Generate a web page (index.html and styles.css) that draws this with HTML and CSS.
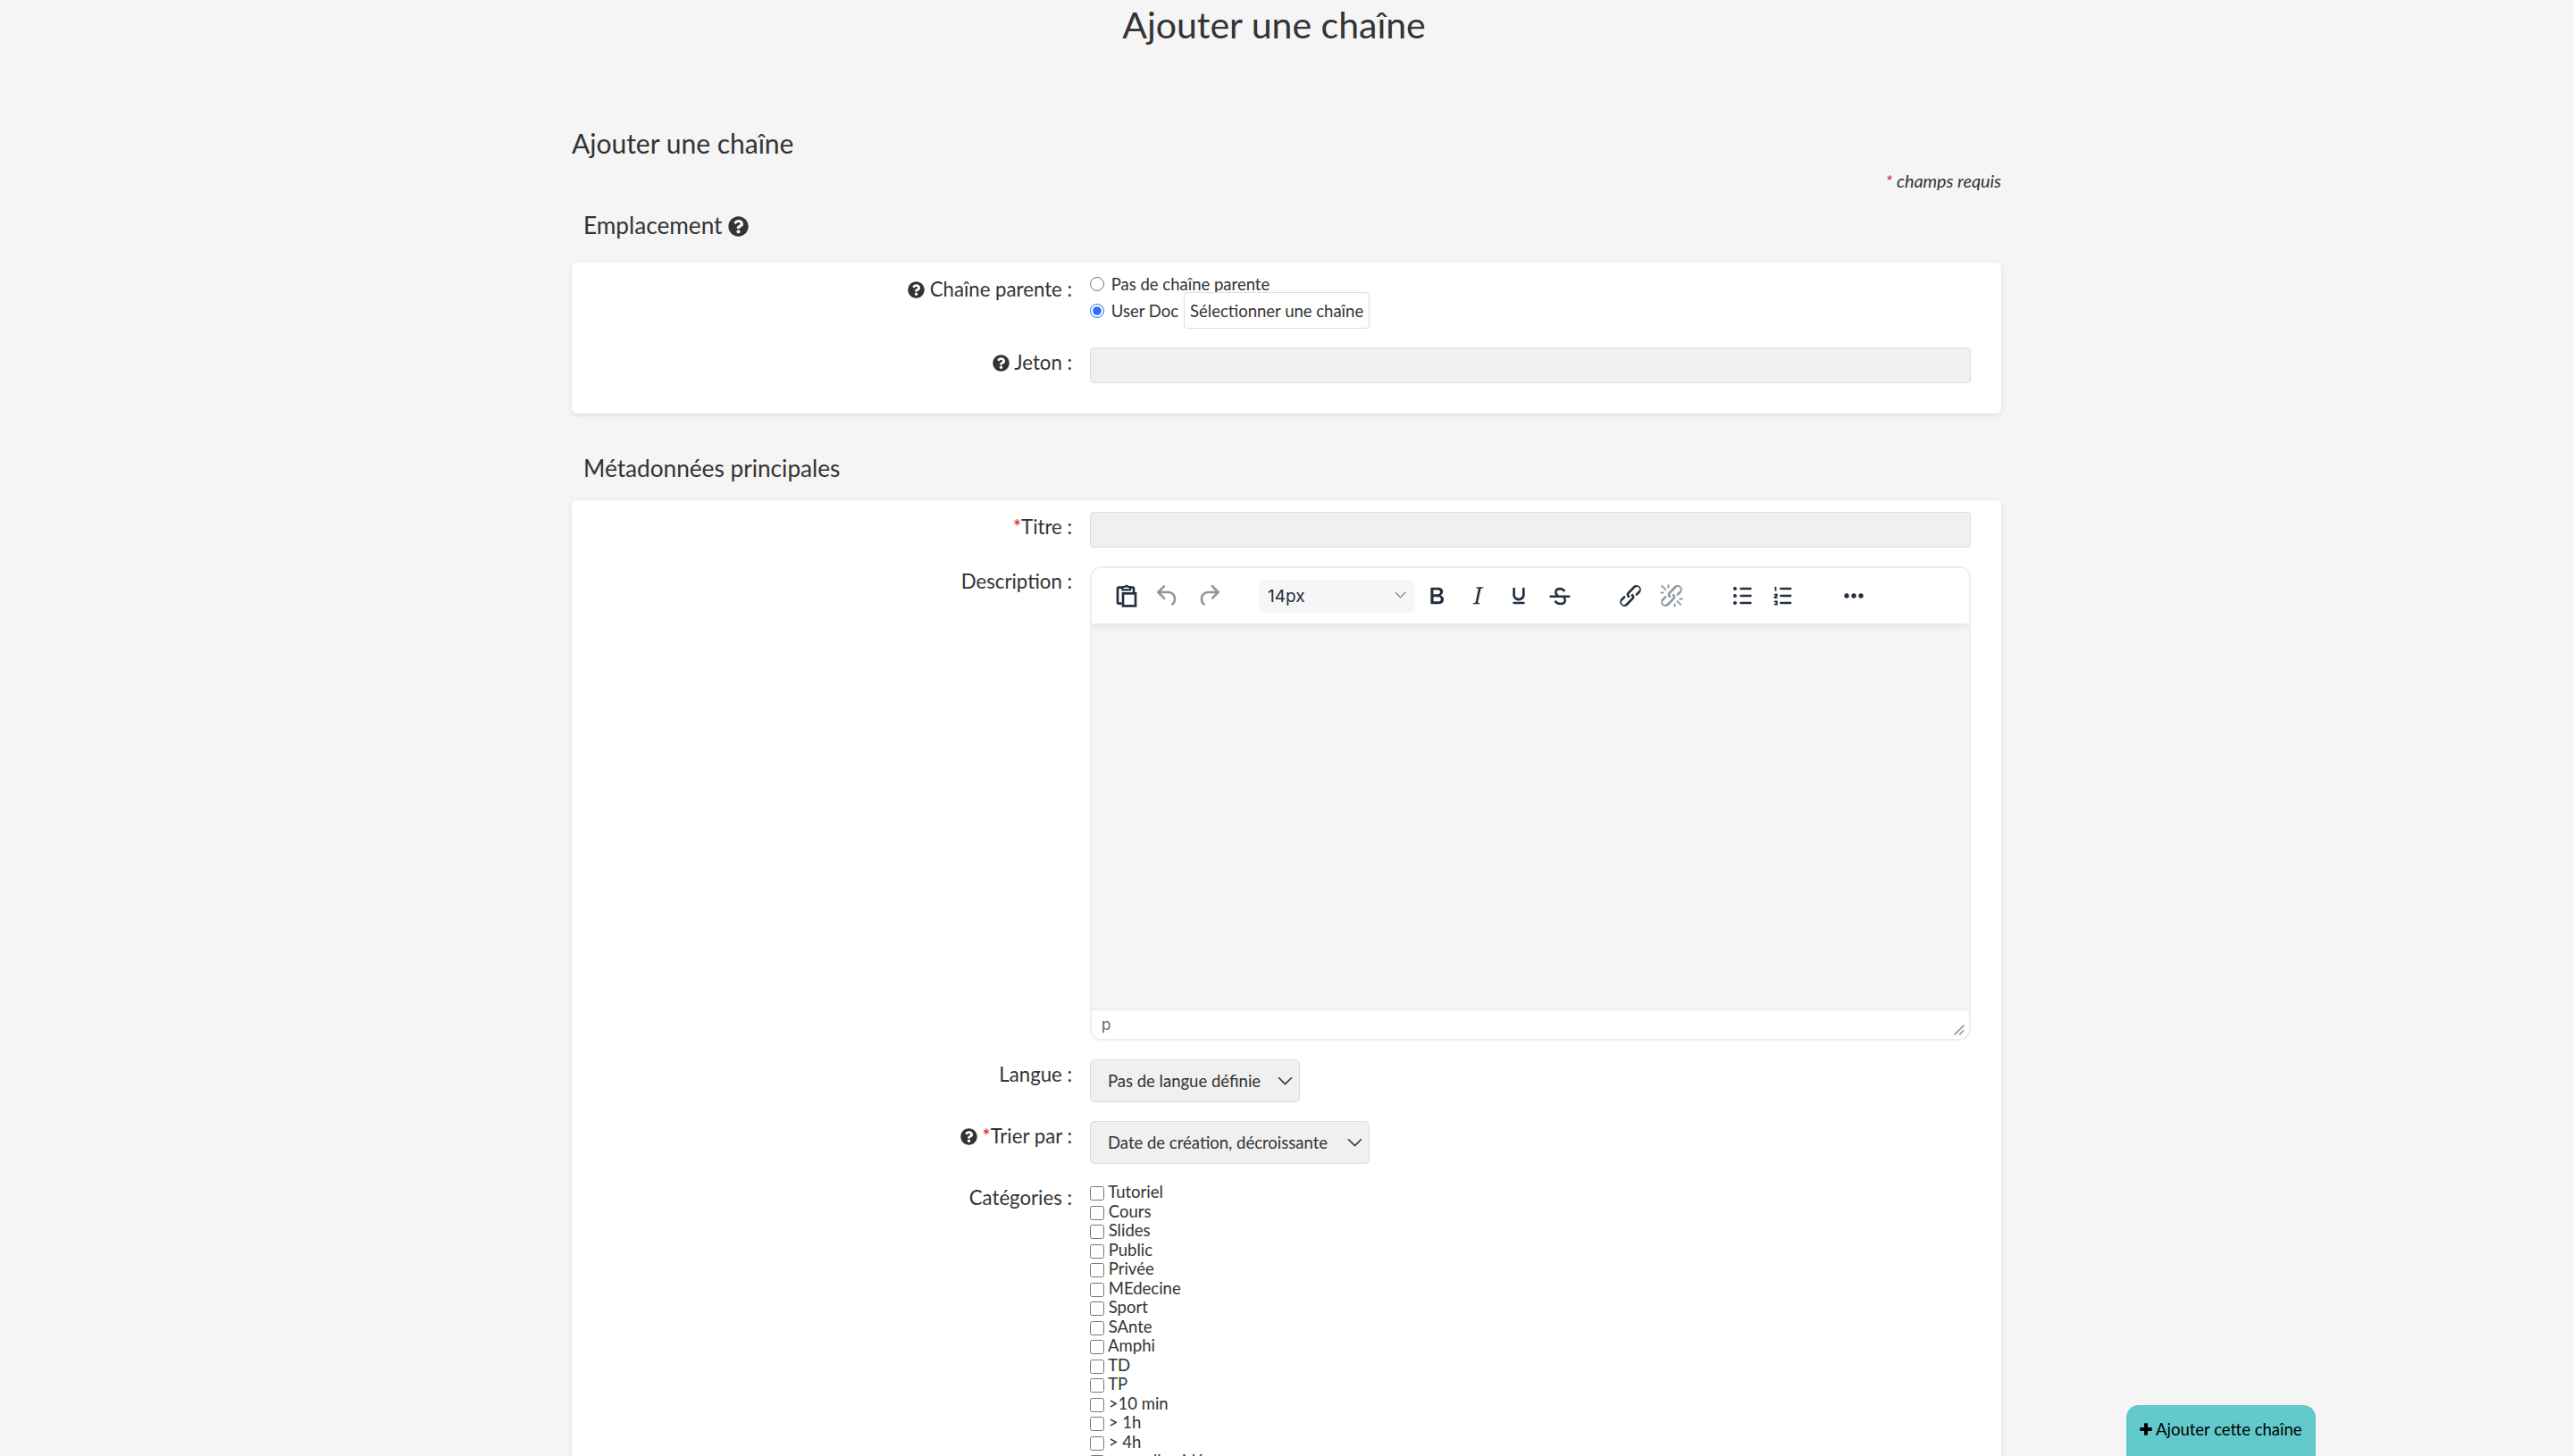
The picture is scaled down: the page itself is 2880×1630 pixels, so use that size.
FILE: index.html
```html
<!DOCTYPE html>
<html lang="fr">
<head>
    <meta charset="UTF-8">
    <title>Ajouter une chaîne</title>
    <link rel="stylesheet" href="styles.css">
</head>
<body>
    <svg class="defs" width="0" height="0">
        <symbol id="help" viewBox="0 0 512 512">
            <path d="M504 256c0 136.997-111.043 248-248 248S8 392.997 8 256C8 119.083 119.043 8 256 8s248 111.083 248 248zM262.655 90c-54.497 0-89.255 22.957-116.549 63.758-3.536 5.286-2.353 12.415 2.715 16.258l34.699 26.31c5.205 3.947 12.621 3.008 16.665-2.122 17.864-22.658 30.113-35.797 57.303-35.797 20.429 0 45.698 13.148 45.698 32.958 0 14.976-12.363 22.667-32.534 33.976C247.128 238.528 216 254.941 216 296v4c0 6.627 5.373 12 12 12h56c6.627 0 12-5.373 12-12v-1.333c0-28.462 83.186-29.647 83.186-106.667 0-58.002-60.165-102-116.531-102zM256 338c-25.365 0-46 20.635-46 46 0 25.364 20.635 46 46 46s46-20.636 46-46c0-25.365-20.635-46-46-46z"/>
        </symbol>
    </svg>

    <h1 class="page-title">Ajouter une chaîne</h1>

    <main class="container">
        <h2 class="form-title">Ajouter une chaîne</h2>
        <p class="required-note"><span class="star">*</span> champs requis</p>

        <h3 class="section-title">Emplacement <svg class="help help-big"><use href="#help"/></svg></h3>
        <section class="card card-first">
            <div class="row">
                <label class="row-label"><svg class="help"><use href="#help"/></svg> Chaîne parente :</label>
                <div class="radios">
                    <label class="radio-line"><input type="radio" name="parent"> Pas de chaîne parente</label>
                    <div class="radio-second">
                        <label class="radio-line"><input type="radio" name="parent" checked> User Doc</label>
                        <button class="pick-btn" type="button">Sélectionner une chaîne</button>
                    </div>
                </div>
            </div>
            <div class="row">
                <label class="row-label"><svg class="help"><use href="#help"/></svg> Jeton :</label>
                <input class="text-input" type="text">
            </div>
        </section>

        <h3 class="section-title section-second">Métadonnées principales</h3>
        <section class="card card-main">
            <div class="row">
                <label class="row-label"><span class="star">*</span>Titre :</label>
                <input class="text-input" type="text">
            </div>
            <div class="row">
                <label class="row-label">Description :</label>
                <div class="editor">
                    <div class="toolbar">
                        <div class="tool-group">
                            <button class="tool" type="button">
                                <svg viewBox="0 0 24 24" fill="none" stroke="#222f3e" stroke-width="2"><path d="M8 18.5H5.500a1 1 0 0 1-1-1V6a1 1 0 0 1 1-1H8"/><path d="M14.500 5H17a1 1 0 0 1 1 1v3"/><path d="M8.500 7V4.500h2.200a1.400 1.400 0 0 1 2.600 0h1.700V7z" stroke-width="1.600"/><rect x="9" y="10" width="10.500" height="10.500"/></svg>
                            </button>
                            <button class="tool off" type="button">
                                <svg viewBox="0 0 24 24"><path d="M6.400 8H12c3.700 0 6.200 2 6.800 5.100.6 2.700-.4 5.600-2.300 6.800a1 1 0 0 1-1-1.800c1.100-.6 1.800-2.700 1.400-4.600-.5-2.100-2.100-3.500-4.900-3.500H6.400l3.300 3.300a1 1 0 1 1-1.400 1.400l-5-5a1 1 0 0 1 0-1.400l5-5a1 1 0 0 1 1.400 1.400L6.400 8Z"/></svg>
                            </button>
                            <button class="tool off" type="button">
                                <svg viewBox="0 0 24 24"><path d="M17.600 10H12c-2.800 0-4.400 1.400-4.900 3.500-.4 2 .3 4 1.400 4.600a1 1 0 1 1-1 1.800c-2-1.200-2.900-4.100-2.300-6.800.6-3 3-5.100 6.800-5.100h5.600l-3.300-3.300a1 1 0 1 1 1.400-1.400l5 5a1 1 0 0 1 0 1.400l-5 5a1 1 0 0 1-1.400-1.400l3.300-3.300Z"/></svg>
                            </button>
                        </div>
                        <div class="tool-group">
                            <div class="size-select">
                                <span>14px</span>
                                <svg class="size-caret" viewBox="0 0 10 10"><path d="M.6 1.500a.6.600 0 0 1 .8 0L5 5.200l3.600-3.700a.6.600 0 1 1 .8.800l-4 4a.6.600 0 0 1-.8 0l-4-4a.6.600 0 0 1 0-.8Z"/></svg>
                            </div>
                            <button class="tool" type="button">
                                <svg viewBox="0 0 24 24"><path d="M7.800 19c-.3 0-.5 0-.6-.2l-.2-.5V5.700c0-.2 0-.4.2-.5l.6-.2h5c1.500 0 2.700.3 3.500 1 .7.600 1.100 1.400 1.100 2.500a3 3 0 0 1-.6 1.900c-.4.600-1 1-1.600 1.200.4.100.9.300 1.300.6s.8.700 1 1.200c.4.400.5 1 .5 1.600 0 1.300-.4 2.300-1.300 3-.8.700-2.100 1-3.800 1H7.800Zm5-8.300c.6 0 1.200-.1 1.600-.5.400-.3.600-.7.600-1.300 0-1.100-.8-1.700-2.300-1.700H9.300v3.500h3.500Zm.5 6c.7 0 1.300-.1 1.700-.4.400-.4.600-.9.600-1.500s-.2-1-.7-1.400c-.4-.3-1-.4-2-.4H9.400v3.700h3.900Z"/></svg>
                            </button>
                            <button class="tool" type="button">
                                <svg viewBox="0 0 24 24"><path d="m16.700 4.700-.1.900h-.3c-.6 0-1 0-1.400.3-.3.300-.4.600-.5 1.100l-2.100 9.800v.6c0 .5.400.8 1.400.8h.2l-.2.800H8l.2-.8h.2c1.100 0 1.800-.5 2-1.500l2-9.800.1-.5c0-.6-.4-.8-1.400-.8h-.3l.2-.9h5.900Z"/></svg>
                            </button>
                            <button class="tool" type="button">
                                <svg viewBox="0 0 24 24"><path d="M16 5c.6 0 1 .4 1 1v5.500a4 4 0 0 1-.4 1.800l-1 1.400a5.300 5.300 0 0 1-5.500 1 5 5 0 0 1-1.600-1c-.5-.4-.8-.9-1.100-1.400a4 4 0 0 1-.4-1.800V6c0-.6.4-1 1-1s1 .4 1 1v5.500c0 .3 0 .6.2 1l.6.700a3.300 3.300 0 0 0 2.200.8 3.400 3.400 0 0 0 2.200-.8c.3-.2.400-.5.600-.8l.2-.9V6c0-.6.400-1 1-1ZM8 17h8c.6 0 1 .4 1 1s-.4 1-1 1H8a1 1 0 0 1 0-2Z"/></svg>
                            </button>
                            <button class="tool" type="button">
                                <svg viewBox="0 0 24 24" fill="none" stroke="#222f3e" stroke-width="1.900"><path d="M16 8.300c-.8-1.400-2-2.200-3.800-2.200-2.200 0-3.700 1.200-3.700 3 0 1.300.8 2.100 2 2.600"/><path d="M3.500 12.500h17"/><path d="M15 13.500c1 .6 1.400 1.300 1.400 2.200 0 1.800-1.600 3-4 3-2 0-3.600-.9-4.500-2.500"/></svg>
                            </button>
                        </div>
                        <div class="tool-group">
                            <button class="tool" type="button">
                                <svg viewBox="0 0 24 24"><path d="M6.200 12.300a1 1 0 0 1 1.400 1.400l-2 2a2 2 0 1 0 2.600 2.800l4.800-4.800a1 1 0 0 0 0-1.400 1 1 0 1 1 1.400-1.300 2.900 2.900 0 0 1 0 4L9.600 20a3.900 3.900 0 0 1-5.500-5.500l2.100-2.200Zm11.600-.6a1 1 0 0 1-1.400-1.400l2-2a2 2 0 1 0-2.600-2.800L11 10.300a1 1 0 0 0 0 1.400A1 1 0 1 1 9.600 13a2.900 2.900 0 0 1 0-4L14.400 4a3.900 3.900 0 0 1 5.500 5.500l-2.100 2.200Z"/></svg>
                            </button>
                            <button class="tool off" type="button">
                                <svg viewBox="0 0 24 24"><path d="M6.200 12.300a1 1 0 0 1 1.400 1.400l-2.100 2a2 2 0 1 0 2.700 2.800l4.800-4.800a1 1 0 0 0 0-1.400 1 1 0 1 1 1.400-1.300 2.900 2.900 0 0 1 0 4L9.600 20a3.900 3.900 0 0 1-5.500-5.500l2.100-2.200Zm11.600-.6a1 1 0 0 1-1.400-1.400l2.100-2a2 2 0 1 0-2.700-2.800L11 10.300a1 1 0 0 0 0 1.400A1 1 0 1 1 9.600 13a2.900 2.900 0 0 1 0-4L14.400 4a3.900 3.900 0 0 1 5.500 5.500l-2.100 2.200ZM7.600 6.300a.8.800 0 0 1-1 1.100L3.300 4.200a.7.700 0 1 1 1-1l3.300 3.100ZM5.100 8.600a.8.800 0 0 1 0 1.500H3a.8.800 0 0 1 0-1.500h2.100Zm5-3.500a.8.800 0 0 1-1.500 0V3a.8.800 0 0 1 1.500 0v2.100Zm6 11.800a.8.800 0 0 1 1-1l3.200 3.200a.8.800 0 0 1-1 1L16.100 16.900Zm-2.200 2a.8.800 0 0 1 1.500 0V21a.8.800 0 0 1-1.500 0v-2.100Zm5-3.500a.7.700 0 1 1 0-1.500H21a.8.800 0 0 1 0 1.500h-2.100Z"/></svg>
                            </button>
                        </div>
                        <div class="tool-group">
                            <button class="tool" type="button">
                                <svg viewBox="0 0 24 24"><path d="M11 5h8c.6 0 1 .4 1 1s-.4 1-1 1h-8a1 1 0 0 1 0-2Zm0 6h8c.6 0 1 .4 1 1s-.4 1-1 1h-8a1 1 0 0 1 0-2Zm0 6h8c.6 0 1 .4 1 1s-.4 1-1 1h-8a1 1 0 0 1 0-2Z"/><circle cx="6" cy="6" r="1.500"/><circle cx="6" cy="12" r="1.500"/><circle cx="6" cy="18" r="1.500"/></svg>
                            </button>
                            <button class="tool" type="button">
                                <svg viewBox="0 0 24 24"><path d="M10 17h8c.6 0 1 .4 1 1s-.4 1-1 1h-8a1 1 0 0 1 0-2Zm0-6h8c.6 0 1 .4 1 1s-.4 1-1 1h-8a1 1 0 0 1 0-2Zm0-6h8c.6 0 1 .4 1 1s-.4 1-1 1h-8a1 1 0 1 1 0-2Z"/><path d="M5 4.500h1.300V8H5V5.500h-.7zM4.300 10.400h3v1.900l-1.700 1h1.700v1h-3v-1.800l1.700-1.100H4.300zM4.300 16.200h3v3.600h-3v-1h1.800v-.4H4.800v-.8h1.300v-.4H4.300z"/></svg>
                            </button>
                        </div>
                        <div class="tool-group">
                            <button class="tool" type="button">
                                <svg viewBox="0 0 24 24"><circle cx="6" cy="12" r="2"/><circle cx="12" cy="12" r="2"/><circle cx="18" cy="12" r="2"/></svg>
                            </button>
                        </div>
                    </div>
                    <div class="editor-area"></div>
                    <div class="statusbar">
                        <span>p</span>
                        <svg class="resize-grip" viewBox="0 0 10 10"><path d="M8.100 1.100a.5.500 0 1 1 .8.800l-7 7a.5.500 0 0 1-.8-.8zM8.100 5.100a.5.500 0 1 1 .8.800l-3 3a.5.500 0 0 1-.8-.8z"/></svg>
                    </div>
                </div>
            </div>
            <div class="row">
                <label class="row-label">Langue :</label>
                <div class="select-box select-lang">
                    <span>Pas de langue définie</span>
                    <svg class="select-caret" viewBox="0 0 16 16"><path d="M1 4l7 7 7-7"/></svg>
                </div>
            </div>
            <div class="row">
                <label class="row-label"><svg class="help"><use href="#help"/></svg> <span class="star">*</span>Trier par :</label>
                <div class="select-box select-sort">
                    <span>Date de création, décroissante</span>
                    <svg class="select-caret" viewBox="0 0 16 16"><path d="M1 4l7 7 7-7"/></svg>
                </div>
            </div>
            <div class="row">
                <label class="row-label">Catégories :</label>
                <ul class="check-list">
                    <li><input type="checkbox"> Tutoriel</li>
                    <li><input type="checkbox"> Cours</li>
                    <li><input type="checkbox"> Slides</li>
                    <li><input type="checkbox"> Public</li>
                    <li><input type="checkbox"> Privée</li>
                    <li><input type="checkbox"> MEdecine</li>
                    <li><input type="checkbox"> Sport</li>
                    <li><input type="checkbox"> SAnte</li>
                    <li><input type="checkbox"> Amphi</li>
                    <li><input type="checkbox"> TD</li>
                    <li><input type="checkbox"> TP</li>
                    <li><input type="checkbox"> &gt;10 min</li>
                    <li><input type="checkbox"> &gt; 1h</li>
                    <li><input type="checkbox"> &gt; 4h</li>
                    <li><input type="checkbox"> nouvelle vidéo</li>
                </ul>
            </div>
        </section>
    </main>

    <button class="save-btn" type="button">
        <svg class="plus" viewBox="0 0 14 14"><path d="M5 1.200C5 .6 5.400.2 6 .2h2c.6 0 1 .4 1 1V5h3.800c.6 0 1 .4 1 1v2c0 .6-.4 1-1 1H9v3.800c0 .6-.4 1-1 1H6c-.6 0-1-.4-1-1V9H1.200c-.6 0-1-.4-1-1V6c0-.6.4-1 1-1H5z"/></svg>
        Ajouter cette chaîne
    </button>
</body>
</html>
```

FILE: styles.css
```css
html, body {
    height: 1630px;
    overflow: hidden;
}
body {
    margin: 0;
    background-color: #f5f5f5;
    color: #333;
    font-family: Lato, sans-serif;
    font-size: 18.5px;
}
.defs {
    position: absolute;
}
.page-title {
    margin: 0;
    padding: 4px 28px 0 0;
    text-align: center;
    font-size: 41px;
    font-weight: 400;
    line-height: 48px;
}
.container {
    width: 1600px;
    margin-left: 640px;
}
.form-title {
    margin: 90px 0 0;
    font-size: 30px;
    font-weight: 400;
    line-height: 36px;
}
.required-note {
    margin: 13px 0 0;
    text-align: right;
    font-size: 19.8px;
    font-style: italic;
    line-height: 22px;
}
.star {
    color: #d9232e;
}
.section-title {
    margin: 23px 0 0 13px;
    font-size: 26.2px;
    font-weight: 400;
    line-height: 32px;
}
.section-second {
    margin-top: 45px;
}
.help {
    width: 19px;
    height: 19px;
    fill: #333;
    vertical-align: -2px;
}
.help-big {
    width: 23px;
    height: 23px;
    vertical-align: -3px;
}
.card {
    background-color: #fff;
    border-radius: 6px;
    box-shadow: 0 2px 6px rgba(0, 0, 0, 0.1);
}
.card-first {
    margin: 26px 0 0;
    padding: 13px 34px 34px 0;
}
.card-main {
    margin: 20px 0 0;
    padding: 13px 34px 0 0;
}
.row {
    display: grid;
    grid-template-columns: 560px 1fr;
    column-gap: 20px;
    margin-bottom: 21px;
}
.row:last-child {
    margin-bottom: 0;
}
.row-label {
    padding-top: 4px;
    text-align: right;
    font-size: 22.2px;
    line-height: 26px;
}
.radios {
    display: flex;
    flex-direction: column;
    align-items: flex-start;
    padding-top: 1px;
}
.radio-line {
    display: flex;
    align-items: center;
    gap: 3px;
    height: 20px;
    white-space: pre;
}
.radio-line input {
    width: 16px;
    height: 16px;
    margin: 0;
    accent-color: #2f6fed;
}
.radio-second {
    display: flex;
    align-items: center;
    gap: 6px;
    margin-top: -1px;
}
.pick-btn {
    height: 41px;
    padding: 0 6px;
    background-color: #fff;
    border: 1px solid #ddd;
    border-radius: 4px;
    color: #333;
    font-family: Lato, sans-serif;
    font-size: 18.5px;
}
.text-input {
    height: 40px;
    box-sizing: border-box;
    background-color: #f0f0f0;
    border: 1px solid #ddd;
    border-radius: 4px;
}
.editor {
    height: 531px;
    box-sizing: border-box;
    display: flex;
    flex-direction: column;
    border: 2px solid #eee;
    border-radius: 13px;
    overflow: hidden;
}
.toolbar {
    display: flex;
    align-items: center;
    gap: 33px;
    height: 62px;
    flex: none;
    padding-left: 16px;
    background-color: #fff;
    box-shadow: 0 3px 8px rgba(0, 0, 0, 0.08);
    position: relative;
}
.tool-group {
    display: flex;
    align-items: center;
}
.tool {
    width: 46px;
    height: 38px;
    padding: 0;
    display: flex;
    align-items: center;
    justify-content: center;
    background: none;
    border: 0;
}
.tool svg {
    width: 32px;
    height: 32px;
    fill: #222f3e;
}
.tool svg[fill="none"] {
    fill: none;
}
.tool.off svg {
    fill: rgba(34, 47, 62, 0.5);
}
.size-select {
    width: 174px;
    height: 37px;
    margin-right: 2px;
    box-sizing: border-box;
    display: flex;
    align-items: center;
    justify-content: space-between;
    padding: 0 9px 0 10px;
    background-color: #f6f6f6;
    border-radius: 5px;
    color: #222f3e;
    font-family: Inter, sans-serif;
    font-size: 19px;
}
.size-caret {
    width: 13px;
    height: 13px;
    fill: rgba(34, 47, 62, 0.5);
}
.editor-area {
    flex: 1;
    background-color: #f5f5f5;
}
.statusbar {
    display: flex;
    align-items: center;
    justify-content: space-between;
    height: 32px;
    flex: none;
    padding: 0 4px 0 11px;
    background-color: #fff;
    border-top: 2px solid #eee;
    color: #5b6573;
    font-family: Inter, sans-serif;
    font-size: 17px;
}
.resize-grip {
    width: 14px;
    height: 14px;
    fill: rgba(34, 47, 62, 0.5);
    align-self: flex-end;
    margin-bottom: 3px;
}
.select-box {
    height: 48px;
    box-sizing: border-box;
    display: flex;
    align-items: center;
    justify-content: space-between;
    padding: 0 7px 0 19px;
    background-color: #f0f0f0;
    border: 1px solid #ddd;
    border-radius: 5px;
}
.select-lang {
    width: 235px;
}
.select-sort {
    width: 313px;
}
.select-caret {
    width: 17px;
    height: 17px;
    fill: none;
    stroke: #333;
    stroke-width: 1.5;
}
.check-list {
    margin: 0;
    padding: 0;
    list-style: none;
    line-height: 21.5px;
}
.check-list input {
    width: 16px;
    height: 16px;
    margin: 0;
    vertical-align: -3px;
}
.save-btn {
    position: fixed;
    right: 288px;
    bottom: 0;
    width: 212px;
    height: 57px;
    padding: 16px 0 0 15px;
    display: flex;
    align-items: flex-start;
    gap: 4px;
    background-color: #62c9cc;
    border: 0;
    border-radius: 14px 14px 0 0;
    color: #000;
    font-family: Lato, sans-serif;
    font-size: 18.5px;
    line-height: 22px;
    white-space: nowrap;
}
.plus {
    width: 14px;
    height: 14px;
    margin-top: 4px;
}
```
